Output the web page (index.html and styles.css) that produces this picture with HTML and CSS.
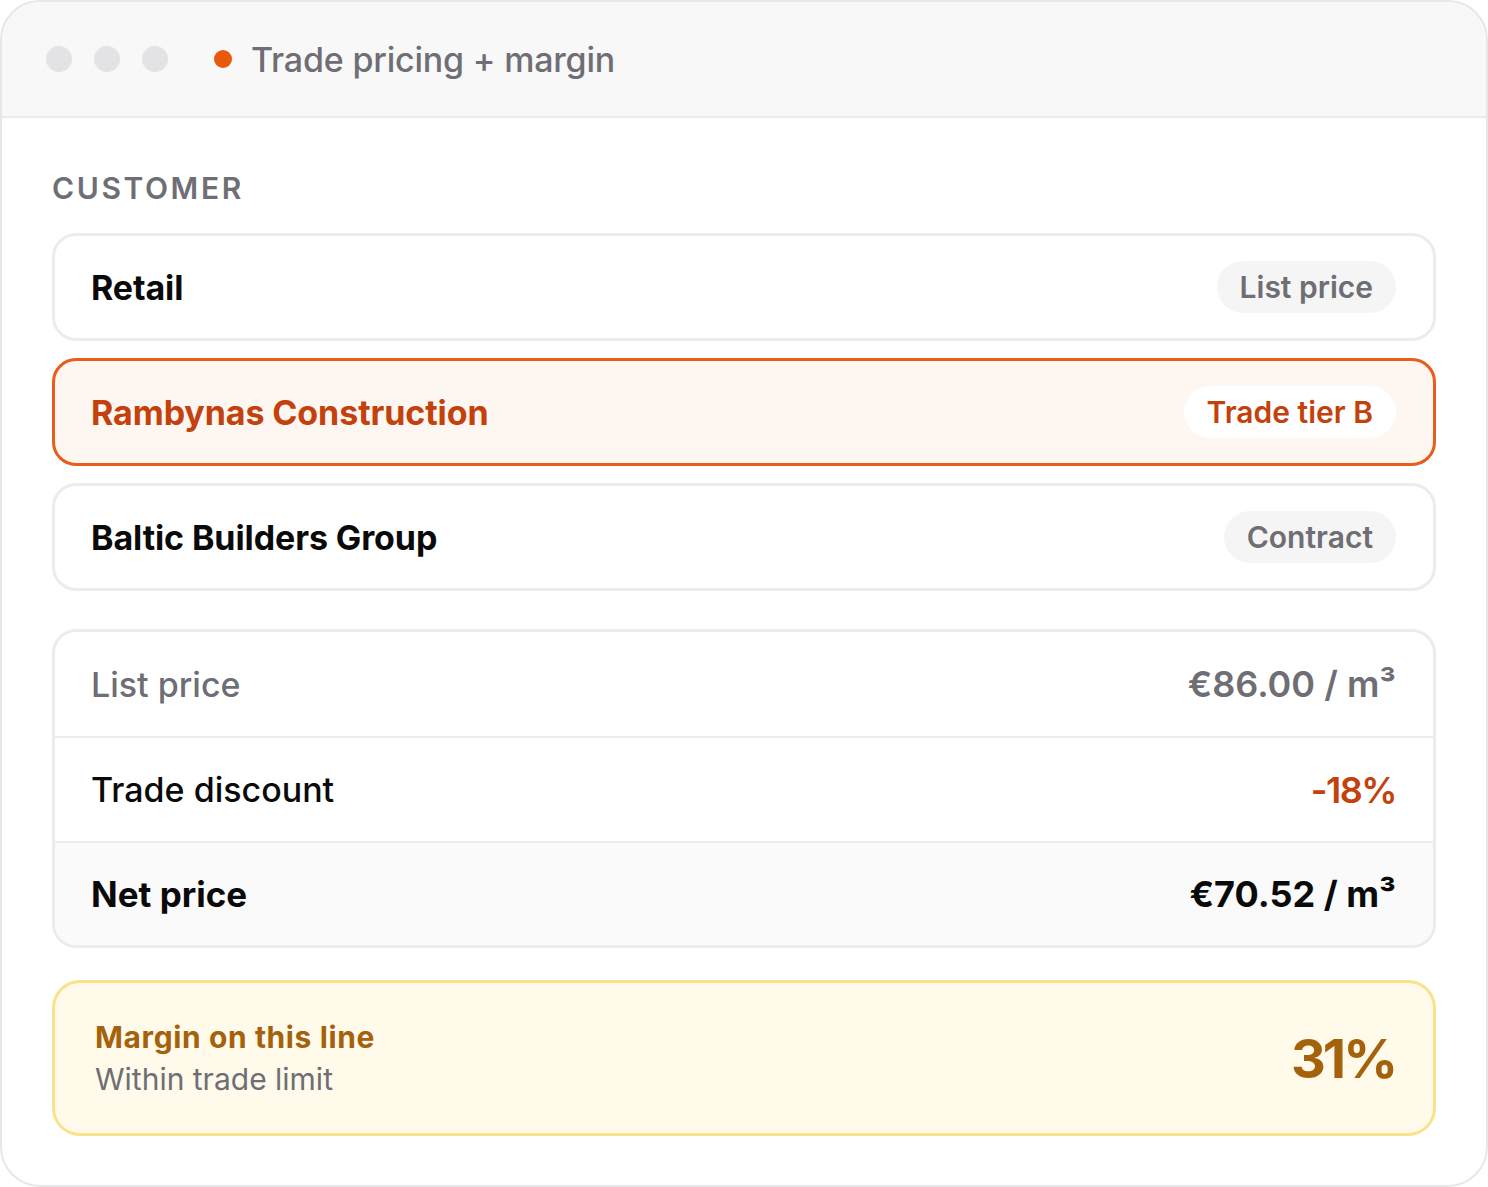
FILE: index.html
```html
<!DOCTYPE html>
<html lang="en">
<head>
<meta charset="utf-8">
<title>Trade pricing + margin</title>
<link rel="stylesheet" href="styles.css">
</head>
<body>
<div class="window">
  <div class="titlebar">
    <div class="dots">
      <span class="dot"></span><span class="dot"></span><span class="dot"></span>
    </div>
    <span class="live"></span>
    <span class="title">Trade pricing + margin</span>
  </div>
  <div class="content">
    <div class="label">CUSTOMER</div>
    <div class="customers">
      <div class="cust">
        <span class="cust-name">Retail</span>
        <span class="pill">List price</span>
      </div>
      <div class="cust active">
        <span class="cust-name">Rambynas Construction</span>
        <span class="pill">Trade tier B</span>
      </div>
      <div class="cust">
        <span class="cust-name">Baltic Builders Group</span>
        <span class="pill">Contract</span>
      </div>
    </div>
    <div class="prices">
      <div class="prow muted">
        <span>List price</span>
        <span class="val">€86.00 / m³</span>
      </div>
      <div class="prow mid">
        <span>Trade discount</span>
        <span class="val disc">-18%</span>
      </div>
      <div class="prow net">
        <span>Net price</span>
        <span class="val">€70.52 / m³</span>
      </div>
    </div>
    <div class="margin">
      <div class="mtext">
        <div class="mtitle">Margin on this line</div>
        <div class="msub">Within trade limit</div>
      </div>
      <div class="mval">31%</div>
    </div>
  </div>
</div>
</body>
</html>
```

FILE: styles.css
```css
* { box-sizing: border-box; }
html, body { margin: 0; padding: 0; background: #ffffff; }
body { font-family: Inter, "Noto Sans", "Liberation Sans", sans-serif; color: #0a0a0a; }

.window {
  width: 1488px;
  height: 1187px;
  border: 2px solid #e7e7e9;
  border-radius: 40px;
  overflow: hidden;
  background: #ffffff;
}

.titlebar {
  height: 116px;
  background: #f8f8f8;
  border-bottom: 2px solid #ececee;
  display: flex;
  align-items: center;
  padding-left: 44px;
}
.dots { display: flex; gap: 22px; }
.dot { width: 26px; height: 26px; border-radius: 50%; background: #e3e3e6; }
.live { width: 18px; height: 18px; border-radius: 50%; background: #ea580c; margin-left: 46px; }
.title { margin-left: 19px; font-size: 34px; font-weight: 500; color: #6e6e74; letter-spacing: -0.2px; }

.content { padding: 51px 50px 0 50px; }

.label {
  font-size: 30px;
  font-weight: 600;
  letter-spacing: 2.6px;
  color: #6e6e74;
  line-height: 38px;
}

.customers { margin-top: 26px; display: flex; flex-direction: column; gap: 17px; }
.cust {
  height: 108px;
  border: 3px solid #ececee;
  border-radius: 24px;
  display: flex;
  align-items: center;
  justify-content: space-between;
  padding: 0 37px 0 36px;
  background: #ffffff;
}
.cust-name { font-size: 34px; font-weight: 700; color: #0a0a0a; letter-spacing: -0.1px; }
.pill {
  font-size: 30px;
  font-weight: 600;
  color: #6e6e74;
  background: #f5f5f6;
  border-radius: 26px;
  height: 52px;
  line-height: 52px;
  padding: 0 23px;
}
.cust.active { border-color: #e85d1a; background: #fdf6f1; }
.cust.active .cust-name { color: #c2410c; }
.cust.active .pill { background: #ffffff; color: #c2410c; }

.prices {
  margin-top: 38px;
  border: 3px solid #ececee;
  border-radius: 24px;
  overflow: hidden;
}
.prow {
  height: 104px;
  display: flex;
  align-items: center;
  justify-content: space-between;
  padding: 0 37px 0 36px;
  font-size: 34px;
  font-weight: 500;
  color: #0a0a0a;
}
.prow + .prow { border-top: 2px solid #ececee; }
.prow.mid { height: 105px; }
.prow.net { height: 104px; }
.prow .val { font-size: 36px; font-weight: 600; }
.prow.muted { color: #6e6e74; }
.prow .disc { color: #c2410c; letter-spacing: -1.5px; }
.prow.net { background: #fafafa; font-weight: 700; font-size: 35px; }
.prow.net .val { font-weight: 700; }

.margin {
  margin-top: 32px;
  height: 156px;
  border: 3px solid #f8e38b;
  border-radius: 28px;
  background: #fffaea;
  display: flex;
  align-items: center;
  justify-content: space-between;
  padding: 0 38px 0 40px;
}
.mtitle { font-size: 30px; font-weight: 700; color: #a5620c; line-height: 42px; letter-spacing: 0.6px; }
.msub { font-size: 30px; font-weight: 400; color: #6e6e74; line-height: 42px; }
.mval { font-size: 54px; font-weight: 700; color: #a5620c; letter-spacing: -3px; }
```
